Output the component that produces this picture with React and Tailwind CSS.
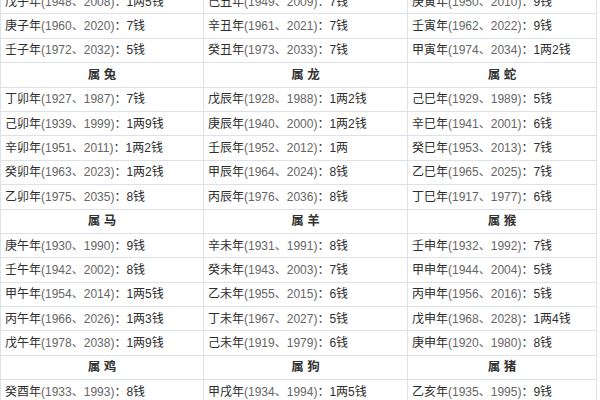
const groups = [
  {
    head: null,
    rows: [
      ["戊子年", "1948、2008", "1两5钱", "己丑年", "1949、2009", "7钱", "庚寅年", "1950、2010", "9钱"],
      ["庚子年", "1960、2020", "7钱", "辛丑年", "1961、2021", "7钱", "壬寅年", "1962、2022", "9钱"],
      ["壬子年", "1972、2032", "5钱", "癸丑年", "1973、2033", "7钱", "甲寅年", "1974、2034", "1两2钱"],
    ],
  },
  {
    head: ["属 兔", "属 龙", "属 蛇"],
    rows: [
      ["丁卯年", "1927、1987", "7钱", "戊辰年", "1928、1988", "1两2钱", "己巳年", "1929、1989", "5钱"],
      ["己卯年", "1939、1999", "1两9钱", "庚辰年", "1940、2000", "1两2钱", "辛巳年", "1941、2001", "6钱"],
      ["辛卯年", "1951、2011", "1两2钱", "壬辰年", "1952、2012", "1两", "癸巳年", "1953、2013", "7钱"],
      ["癸卯年", "1963、2023", "1两2钱", "甲辰年", "1964、2024", "8钱", "乙巳年", "1965、2025", "7钱"],
      ["乙卯年", "1975、2035", "8钱", "丙辰年", "1976、2036", "8钱", "丁巳年", "1917、1977", "6钱"],
    ],
  },
  {
    head: ["属 马", "属 羊", "属 猴"],
    rows: [
      ["庚午年", "1930、1990", "9钱", "辛未年", "1931、1991", "8钱", "壬申年", "1932、1992", "7钱"],
      ["壬午年", "1942、2002", "8钱", "癸未年", "1943、2003", "7钱", "甲申年", "1944、2004", "5钱"],
      ["甲午年", "1954、2014", "1两5钱", "乙未年", "1955、2015", "6钱", "丙申年", "1956、2016", "5钱"],
      ["丙午年", "1966、2026", "1两3钱", "丁未年", "1967、2027", "5钱", "戊申年", "1968、2028", "1两4钱"],
      ["戊午年", "1978、2038", "1两9钱", "己未年", "1919、1979", "6钱", "庚申年", "1920、1980", "8钱"],
    ],
  },
  {
    head: ["属 鸡", "属 狗", "属 猪"],
    rows: [
      ["癸酉年", "1933、1993", "8钱", "甲戌年", "1934、1994", "1两5钱", "乙亥年", "1935、1995", "9钱"],
    ],
  },
];

function Cell({ year, span, weight }) {
  return (
    <td className="h-[24.4px] border border-[#dde2e8] pl-[4px] align-middle whitespace-nowrap">
      <span className="text-[#2e2e2e]">{year}</span>
      <span className="text-[#666]">({span})</span>
      <span className="text-[#2e2e2e]">：{weight}</span>
    </td>
  );
}

export default function App() {
  return (
    <div
      className="w-[600px] h-[400px] overflow-hidden bg-white"
      style={{ fontFamily: '"Liberation Sans", "Noto Sans CJK SC", sans-serif' }}
    >
      <div className="-mt-[11px]">
        <table className="w-[596px] table-fixed border-collapse text-[12px] leading-none">
          <colgroup>
            <col className="w-[203px]" />
            <col className="w-[204px]" />
            <col className="w-[189px]" />
          </colgroup>
          <tbody>
            {groups.map((g, gi) => (
              <>
                {g.head && (
                  <tr key={"h" + gi}>
                    {g.head.map((h) => (
                      <td
                        key={h}
                        className="h-[24.4px] border border-[#dde2e8] text-center align-middle font-bold text-[12.5px] text-[#333] whitespace-pre"
                      >
                        {h}
                      </td>
                    ))}
                  </tr>
                )}
                {g.rows.map((r) => (
                  <tr key={r[0]}>
                    <Cell year={r[0]} span={r[1]} weight={r[2]} />
                    <Cell year={r[3]} span={r[4]} weight={r[5]} />
                    <Cell year={r[6]} span={r[7]} weight={r[8]} />
                  </tr>
                ))}
              </>
            ))}
          </tbody>
        </table>
      </div>
    </div>
  );
}
